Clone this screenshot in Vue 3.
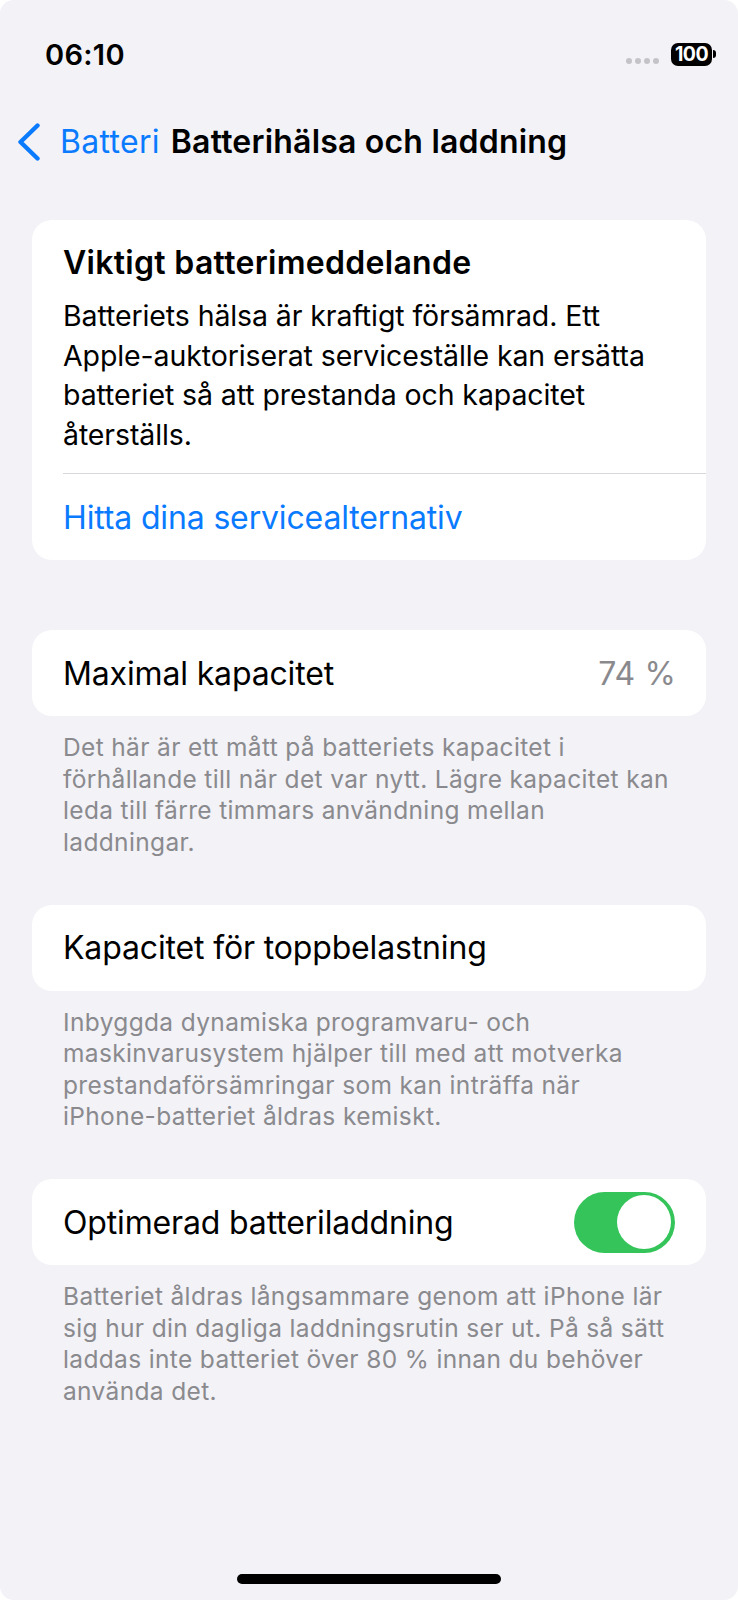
<template>
  <div class="screen">
    <div class="status">
      <span class="time">06:10</span>
      <div class="status-right">
        <div class="dots"><i></i><i></i><i></i><i></i></div>
        <div class="battery"><span>100</span></div>
        <div class="battery-cap"></div>
      </div>
    </div>

    <div class="nav">
      <svg class="chevron" width="24" height="38" viewBox="0 0 24 38">
        <path d="M20.5 2.5 L3.5 19 L20.5 35.5" fill="none" stroke="#0a7aff" stroke-width="4.4" stroke-linecap="round" stroke-linejoin="round" />
      </svg>
      <span class="back">Batteri</span>
      <span class="nav-title">Batterihälsa och laddning</span>
    </div>

    <div class="card notice">
      <h2>Viktigt batterimeddelande</h2>
      <p>Batteriets hälsa är kraftigt försämrad. Ett<br />Apple-auktoriserat serviceställe kan ersätta<br />batteriet så att prestanda och kapacitet<br />återställs.</p>
      <div class="divider"></div>
      <div class="link">Hitta dina servicealternativ</div>
    </div>

    <div v-for="row in rows" :key="row.label" class="group">
      <div class="card row">
        <span>{{ row.label }}</span>
        <span v-if="row.value" class="value">{{ row.value }}</span>
        <div v-if="row.toggle" class="toggle"><div class="knob"></div></div>
      </div>
      <p class="foot">
        <template v-for="line in row.foot" :key="line">{{ line }}<br /></template>
      </p>
    </div>

    <div class="home"></div>
  </div>
</template>

<script setup>
const rows = [
  {
    label: 'Maximal kapacitet',
    value: '74 %',
    foot: [
      'Det här är ett mått på batteriets kapacitet i',
      'förhållande till när det var nytt. Lägre kapacitet kan',
      'leda till färre timmars användning mellan',
      'laddningar.',
    ],
  },
  {
    label: 'Kapacitet för toppbelastning',
    foot: [
      'Inbyggda dynamiska programvaru- och',
      'maskinvarusystem hjälper till med att motverka',
      'prestandaförsämringar som kan inträffa när',
      'iPhone-batteriet åldras kemiskt.',
    ],
  },
  {
    label: 'Optimerad batteriladdning',
    toggle: true,
    foot: [
      'Batteriet åldras långsammare genom att iPhone lär',
      'sig hur din dagliga laddningsrutin ser ut. På så sätt',
      'laddas inte batteriet över 80 % innan du behöver',
      'använda det.',
    ],
  },
]
</script>

<style>
body {
  background: #fff;
}
</style>

<style scoped>
.screen {
  width: 738px;
  height: 1600px;
  border-radius: 14px;
  background: #f2f2f7;
  font-family: Inter, 'Noto Sans', sans-serif;
  color: #000;
  display: flex;
  flex-direction: column;
  overflow: hidden;
}
.status {
  height: 108px;
  padding: 0 22px 0 45px;
  display: flex;
  justify-content: space-between;
  align-items: center;
}
.time {
  font-size: 29px;
  font-weight: 600;
  letter-spacing: 0.3px;
}
.status-right {
  display: flex;
  align-items: center;
}
.dots {
  display: flex;
  gap: 3px;
  margin: 14px 12px 0 0;
}
.dots i {
  width: 6px;
  height: 6px;
  border-radius: 50%;
  background: #c4c4c8;
}
.battery {
  width: 41px;
  height: 23px;
  border-radius: 7px;
  background: #000;
  color: #fff;
  font-size: 19.5px;
  font-weight: 700;
  letter-spacing: -0.6px;
  display: flex;
  align-items: center;
  justify-content: center;
}
.battery-cap {
  width: 3px;
  height: 8px;
  margin-left: 1px;
  border-radius: 0 4px 4px 0;
  background: #000;
}
.nav {
  height: 68px;
  box-sizing: border-box;
  display: flex;
  align-items: center;
  padding: 0 0 2px 17px;
}
.chevron {
  margin: 2px 19px 0 0;
}
.back {
  font-size: 32px;
  color: #0a7aff;
  letter-spacing: 0.3px;
  margin-right: 11px;
}
.nav-title {
  font-size: 32px;
  font-weight: 600;
  letter-spacing: 0.2px;
}
.card {
  margin: 0 32px;
  background: #fff;
  border-radius: 20px;
}
.notice {
  margin-top: 44px;
  height: 340px;
  padding: 22px 0 0 31px;
  box-sizing: border-box;
}
.notice h2 {
  margin: 0;
  font-size: 32px;
  line-height: 42px;
  font-weight: 600;
  letter-spacing: 0.3px;
}
.notice p {
  margin: 12px 0 0;
  font-size: 28.5px;
  line-height: 39.7px;
  letter-spacing: -0.1px;
}
.divider {
  height: 1px;
  background: #d8d8dc;
  margin-top: 18px;
}
.link {
  font-size: 32px;
  color: #0a7aff;
  line-height: 88px;
  letter-spacing: -0.15px;
}
.group {
  margin-top: 70px;
}
.group + .group {
  margin-top: 46.5px;
}
.row {
  height: 86px;
  padding: 0 31px;
  display: flex;
  align-items: center;
  justify-content: space-between;
  font-size: 32px;
  letter-spacing: -0.15px;
}
.value {
  color: #8a8a8e;
  letter-spacing: 0.1px;
  margin-right: -1px;
}
.toggle {
  width: 101px;
  height: 61px;
  border-radius: 31px;
  background: #34c45a;
  position: relative;
}
.knob {
  position: absolute;
  right: 4px;
  top: 3.5px;
  width: 54px;
  height: 54px;
  border-radius: 50%;
  background: #fff;
}
.foot {
  margin: 16px 63px 0;
  font-size: 24.5px;
  line-height: 31.5px;
  letter-spacing: 0.35px;
  color: #8a8a8e;
}
.home {
  margin: auto auto 16px;
  width: 264px;
  height: 10px;
  border-radius: 5px;
  background: #000;
}
</style>
